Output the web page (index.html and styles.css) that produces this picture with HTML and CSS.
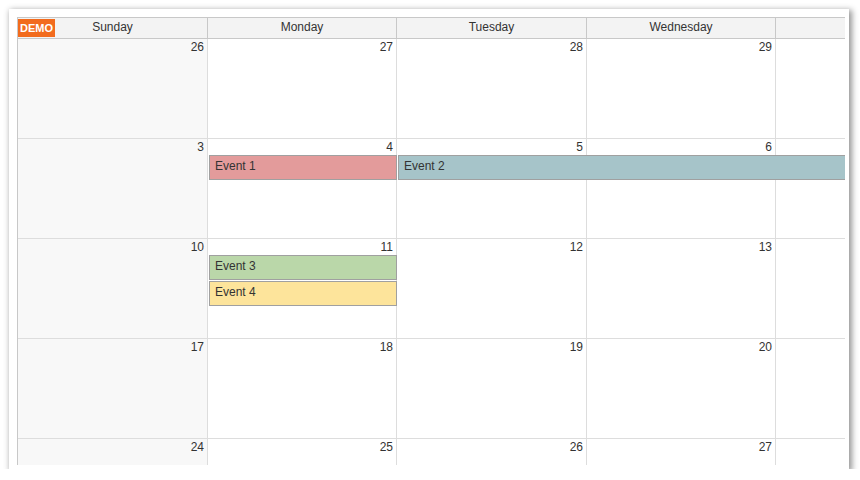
FILE: index.html
```html
<!DOCTYPE html>
<html>
<head>
<meta charset="utf-8">
<link rel="stylesheet" href="styles.css">
</head>
<body>
<div class="frame">
  <div class="cal">
    <div class="cal-inner">
      <div class="head">
        <div class="hcell">Sunday</div>
        <div class="hcell">Monday</div>
        <div class="hcell">Tuesday</div>
        <div class="hcell">Wednesday</div>
        <div class="hcell">Thursday</div>
        <div class="hcell">Friday</div>
        <div class="hcell">Saturday</div>
        <span class="demo">DEMO</span>
      </div>

      <div class="week">
        <div class="cell weekend c1"><span class="num">26</span></div>
        <div class="cell c2"><span class="num">27</span></div>
        <div class="cell c3"><span class="num">28</span></div>
        <div class="cell c4"><span class="num">29</span></div>
        <div class="cell c5"><span class="num">30</span></div>
        <div class="cell c6"><span class="num">31</span></div>
        <div class="cell weekend c7"><span class="num">1</span></div>
      </div>

      <div class="week">
        <div class="cell weekend c1"><span class="num">3</span></div>
        <div class="cell c2"><span class="num">4</span></div>
        <div class="cell c3"><span class="num">5</span></div>
        <div class="cell c4"><span class="num">6</span></div>
        <div class="cell c5"><span class="num">7</span></div>
        <div class="cell c6"><span class="num">8</span></div>
        <div class="cell weekend c7"><span class="num">9</span></div>
        <div class="event red r2 e-mon">Event 1</div>
        <div class="event blue r2 e-tue-sat">Event 2</div>
      </div>

      <div class="week">
        <div class="cell weekend c1"><span class="num">10</span></div>
        <div class="cell c2"><span class="num">11</span></div>
        <div class="cell c3"><span class="num">12</span></div>
        <div class="cell c4"><span class="num">13</span></div>
        <div class="cell c5"><span class="num">14</span></div>
        <div class="cell c6"><span class="num">15</span></div>
        <div class="cell weekend c7"><span class="num">16</span></div>
        <div class="event green r2 e-mon">Event 3</div>
        <div class="event yellow r3 e-mon">Event 4</div>
      </div>

      <div class="week">
        <div class="cell weekend c1"><span class="num">17</span></div>
        <div class="cell c2"><span class="num">18</span></div>
        <div class="cell c3"><span class="num">19</span></div>
        <div class="cell c4"><span class="num">20</span></div>
        <div class="cell c5"><span class="num">21</span></div>
        <div class="cell c6"><span class="num">22</span></div>
        <div class="cell weekend c7"><span class="num">23</span></div>
      </div>

      <div class="week">
        <div class="cell weekend c1"><span class="num">24</span></div>
        <div class="cell c2"><span class="num">25</span></div>
        <div class="cell c3"><span class="num">26</span></div>
        <div class="cell c4"><span class="num">27</span></div>
        <div class="cell c5"><span class="num">28</span></div>
        <div class="cell c6"><span class="num">29</span></div>
        <div class="cell weekend c7"><span class="num">30</span></div>
      </div>
    </div>
  </div>
</div>
</body>
</html>
```

FILE: styles.css
```css
html, body {
  margin: 0;
  padding: 0;
  background: #ffffff;
}

body {
  font-family: "Liberation Sans", Arial, sans-serif;
  font-size: 12px;
  color: #333333;
}

.frame {
  margin: 9px 0 0 9px;
  width: 840px;
  height: 460px;
  box-sizing: border-box;
  padding: 8px 4px 4px 8px;
  background: #ffffff;
  box-shadow: 2px 2px 6px 1px rgba(0, 0, 0, 0.42);
}

.cal {
  width: 828px;
  height: 448px;
  overflow: hidden;
}

.cal-inner {
  width: 1328px;
  border-left: 1px solid #c8c8c8;
  box-sizing: border-box;
}

.head,
.week {
  display: grid;
  grid-template-columns: 190px 189px 190px 189px 190px 189px 190px;
}

.head {
  position: relative;
  height: 22px;
  box-sizing: border-box;
  border-top: 1px solid #c8c8c8;
  border-bottom: 1px solid #c8c8c8;
  background: #f3f3f3;
}

.hcell {
  border-right: 1px solid #c8c8c8;
  text-align: center;
  line-height: 19px;
  color: #333333;
}

.demo {
  position: absolute;
  left: 0;
  top: 1px;
  width: 37px;
  height: 18px;
  background: #f26b1d;
  color: #ffffff;
  font-size: 11px;
  font-weight: bold;
  line-height: 18px;
  text-align: center;
}

.week {
  grid-template-rows: 16px 26px 26px 1fr;
  height: 100px;
}

.cell {
  grid-row: 1 / -1;
  border-right: 1px solid #dddddd;
  border-bottom: 1px solid #dddddd;
  background: #ffffff;
  text-align: right;
  padding: 1px 3px 0 0;
}

.cell.weekend {
  background: #f8f8f8;
}

.c1 { grid-column: 1; }
.c2 { grid-column: 2; }
.c3 { grid-column: 3; }
.c4 { grid-column: 4; }
.c5 { grid-column: 5; }
.c6 { grid-column: 6; }
.c7 { grid-column: 7; }

.num {
  color: #333333;
  line-height: 13px;
}

.event {
  height: 25px;
  box-sizing: border-box;
  border: 1px solid #a0a0a0;
  margin: 0 0 0 1px;
  padding-left: 5px;
  line-height: 21px;
  color: #333333;
  white-space: nowrap;
  overflow: hidden;
}

.r2 { grid-row: 2; }
.r3 { grid-row: 3; }

.e-mon { grid-column: 2; }
.e-tue-sat { grid-column: 3 / span 5; }

.red { background: #e39b9b; }
.blue { background: #a6c4c9; }
.green { background: #bad7a9; }
.yellow { background: #fde49b; }
```
